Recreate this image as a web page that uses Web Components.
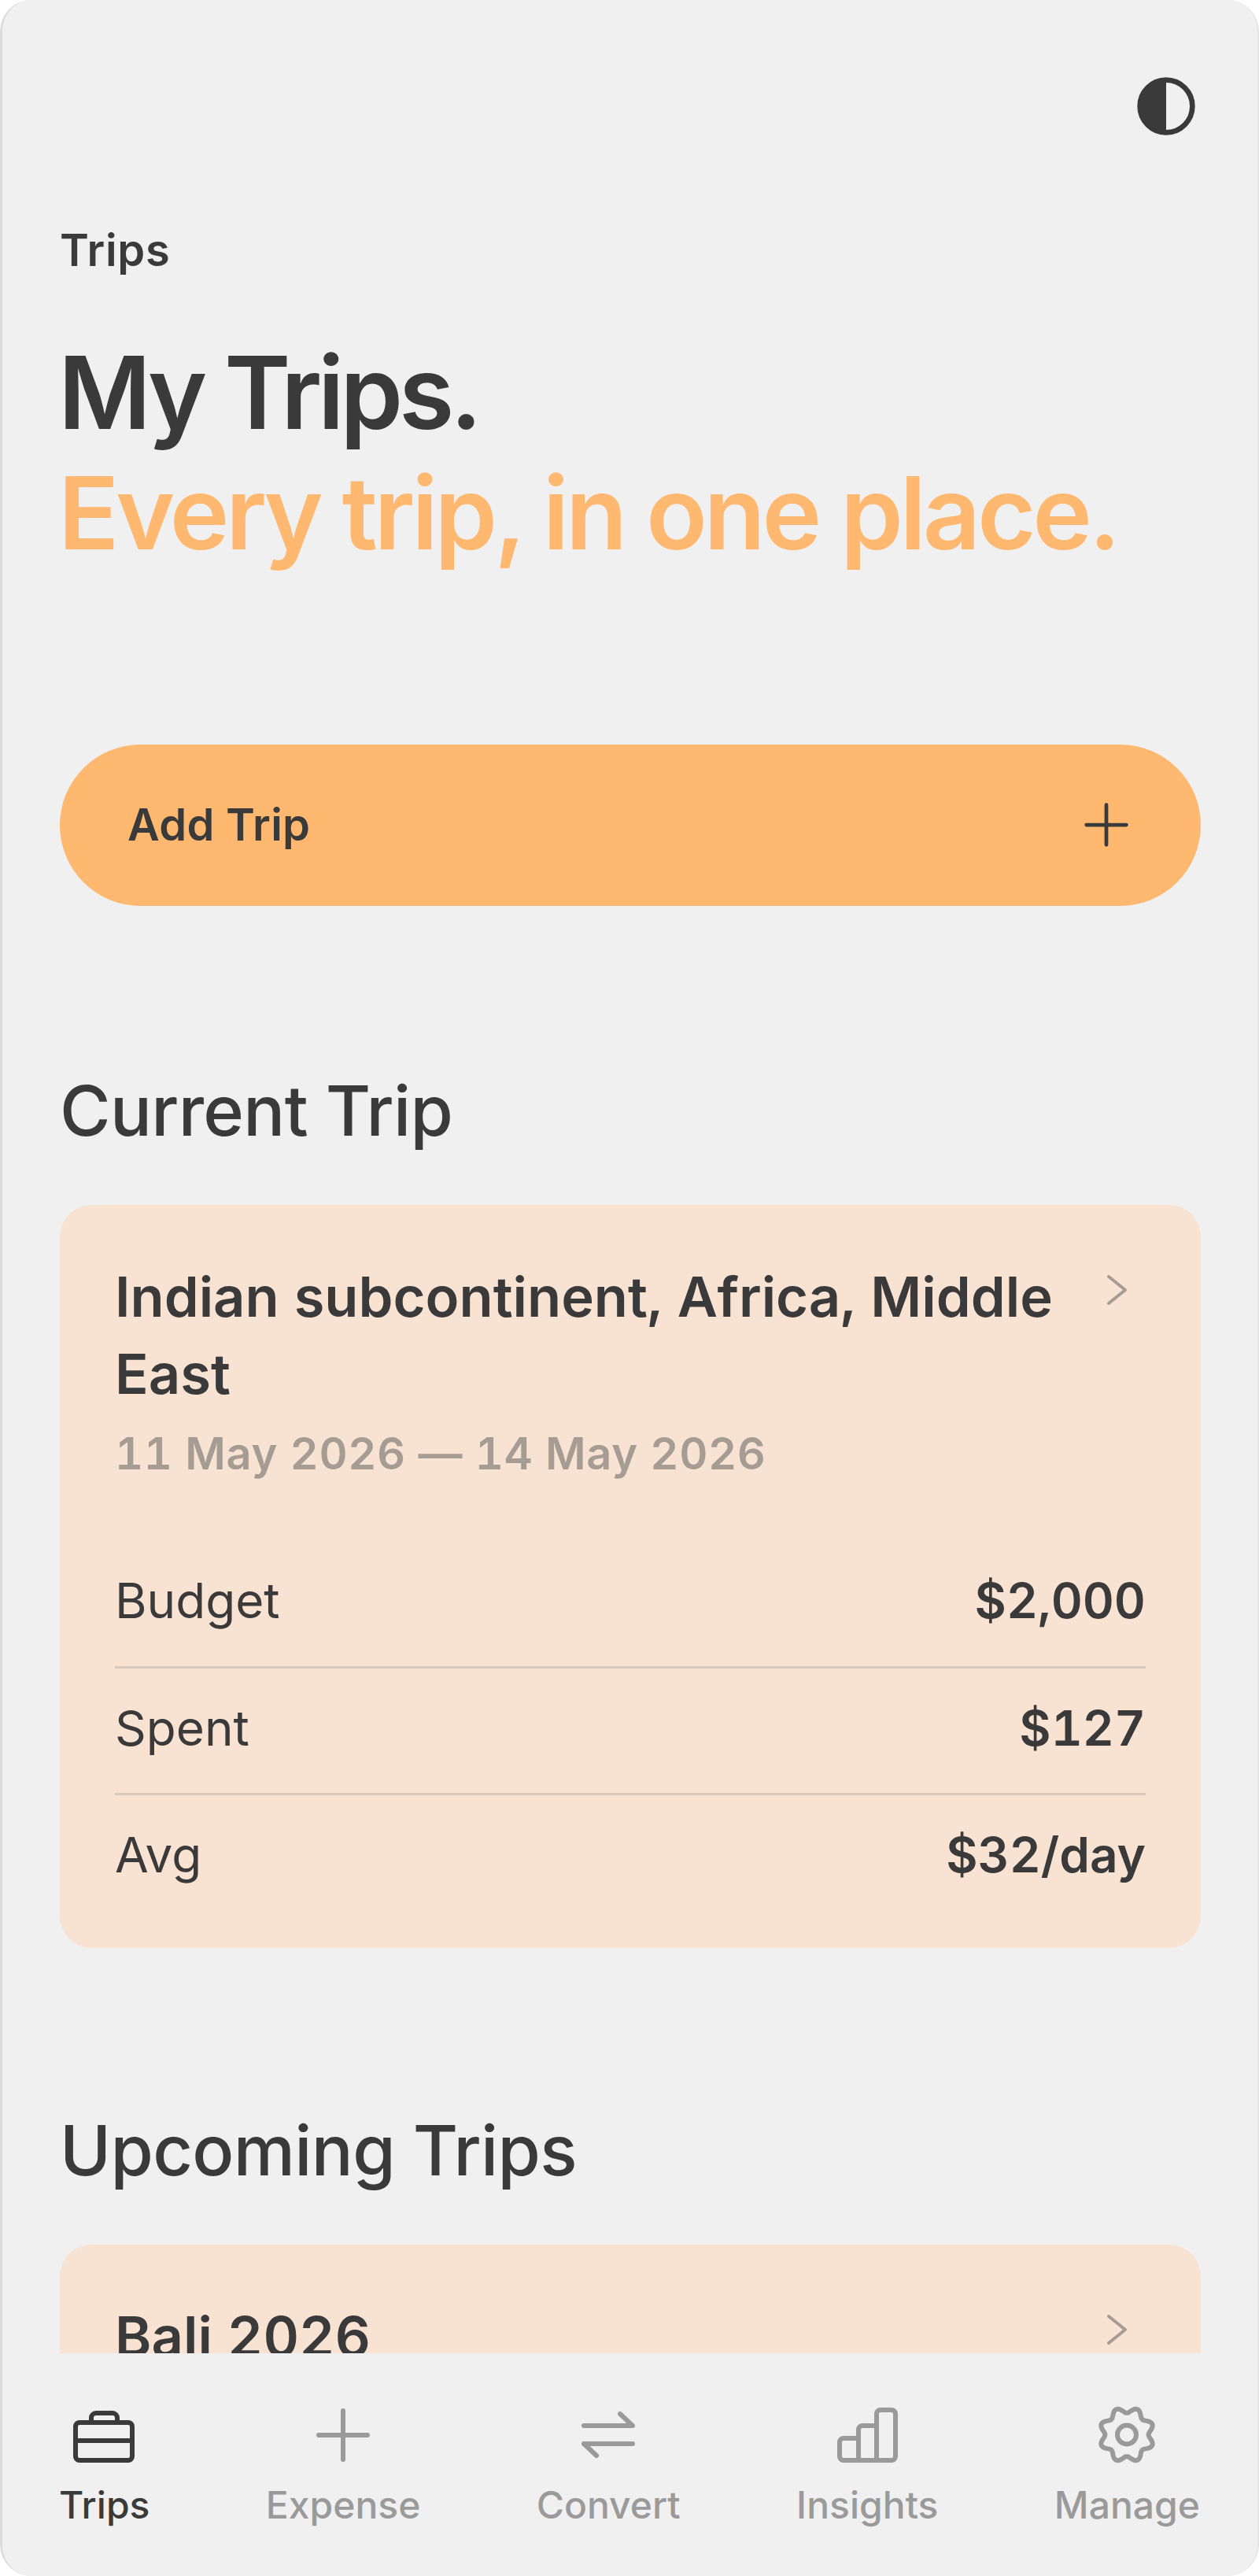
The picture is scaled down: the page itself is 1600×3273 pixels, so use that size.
<!DOCTYPE html>
<html lang="en">
<head>
<meta charset="utf-8">
<title>Trips</title>
<style>
  html, body { margin: 0; padding: 0; background: #fff; }
  body { font-family: Inter, "Liberation Sans", sans-serif; color: #3a3a3a; }
</style>
</head>
<body>
<app-frame>
  <page-header slot="header"></page-header>
  <add-button slot="content">Add Trip</add-button>
  <section-title slot="content" style="margin-top:207px">Current Trip</section-title>
  <trip-card slot="content" style="margin-top:67px" name="Indian subcontinent, Africa, Middle East" dates="11 May 2026 — 14 May 2026">
    <stat-row label="Budget" value="$2,000"></stat-row>
    <stat-row label="Spent" value="$127"></stat-row>
    <stat-row label="Avg" value="$32/day" last></stat-row>
  </trip-card>
  <section-title slot="content" style="margin-top:204px">Upcoming Trips</section-title>
  <trip-card slot="content" style="margin-top:67px" name="Bali 2026"></trip-card>
  <bottom-nav slot="nav"></bottom-nav>
</app-frame>

<script>
class AppFrame extends HTMLElement {
  constructor() {
    super();
    this.attachShadow({ mode: 'open' });
    this.shadowRoot.innerHTML = `
      <style>
        :host { display: flex; flex-direction: column; box-sizing: border-box; width: 1600px; height: 3273px;
          background: #f0f0f0; border-radius: 40px; border-left: 3px solid #dcdcdc; border-right: 2px solid #e4e4e4; overflow: hidden; }
        .scroll { flex: 1; min-height: 0; overflow: hidden; display: flex; flex-direction: column; padding: 0 72px 0 73px; }
        .content { display: flex; flex-direction: column; }
      </style>
      <div class="scroll">
        <slot name="header"></slot>
        <div class="content"><slot name="content"></slot></div>
      </div>
      <slot name="nav"></slot>`;
  }
}

class PageHeader extends HTMLElement {
  constructor() {
    super();
    this.attachShadow({ mode: 'open' });
    this.shadowRoot.innerHTML = `
      <style>
        :host { display: block; }
        .top { display: flex; justify-content: flex-end; padding: 95px 4px 0 0; }
        .top svg { display: block; width: 80px; height: 80px; }
        .crumb { font-size: 56px; font-weight: 600; line-height: 68px; margin-top: 109px; letter-spacing: 0.7px; }
        h1 { margin: 70px 0 0 -2px; font-size: 128px; font-weight: 600; line-height: 153px; letter-spacing: -5.2px; color: #3a3a3a; }
        h1 span { display: block; color: #ffb870; letter-spacing: -4.3px; }
        .spacer { height: 218px; }
      </style>
      <div class="top">
        <svg viewBox="0 0 24 24"><circle cx="12" cy="12" r="10" fill="none" stroke="#3a3a3a" stroke-width="2"/><path d="M12 2a10 10 0 0 0 0 20z" fill="#3a3a3a"/></svg>
      </div>
      <div class="crumb">Trips</div>
      <h1>My Trips.<span>Every trip, in one place.</span></h1>
      <div class="spacer"></div>`;
  }
}

class AddButton extends HTMLElement {
  constructor() {
    super();
    this.attachShadow({ mode: 'open' });
    this.shadowRoot.innerHTML = `
      <style>
        :host { display: flex; align-items: center; justify-content: space-between; box-sizing: border-box; height: 205px; padding: 0 82px 2px 86px; border-radius: 103px; background: #ffb870; font-size: 56px; font-weight: 600; letter-spacing: 0.005em; color: #3a3a3a; }
        svg { display: block; width: 76px; height: 76px; }
      </style>
      <span><slot></slot></span>
      <svg viewBox="0 0 24 24" fill="none" stroke="#3a3a3a" stroke-width="1.5" stroke-linecap="round"><path d="M12 4v16M4 12h16"/></svg>`;
  }
}

class SectionTitle extends HTMLElement {
  constructor() {
    super();
    this.attachShadow({ mode: 'open' });
    this.shadowRoot.innerHTML = `
      <style>
        :host { display: block; font-size: 88px; font-weight: 500; line-height: 106px; letter-spacing: -0.0075em; color: #3a3a3a; }
      </style>
      <slot></slot>`;
  }
}

class TripCard extends HTMLElement {
  constructor() {
    super();
    this.attachShadow({ mode: 'open' });
  }

  connectedCallback() {
    const dates = this.getAttribute('dates');
    this.shadowRoot.innerHTML = `
      <style>
        :host { display: block; flex: none; background: #f8e3d3; border-radius: 40px; padding: 68px 70px 32px; font-variant-numeric: tabular-nums; }
        .head { display: flex; justify-content: space-between; align-items: flex-start; gap: 20px; }
        .name { font-size: 70.5px; font-weight: 600; line-height: 98px; color: #3a3a3a; }
        .dates { font-size: 56px; font-weight: 600; line-height: 68px; letter-spacing: 0.6px; color: #a59d93; margin-top: 18px; }
        svg { flex: none; display: block; width: 48px; height: 48px; margin-top: 16px; margin-right: 13px; }
        .rows { margin-top: 77px; }
      </style>
      <div class="head">
        <div class="name">${this.getAttribute('name')}</div>
        <svg viewBox="0 0 24 24" fill="none" stroke="#a59d93" stroke-width="2" stroke-linecap="round" stroke-linejoin="round"><path d="M7 3.5l10.5 8.5-10.5 8.5"/></svg>
      </div>
      ${dates ? `<div class="dates">${dates}</div>` : ''}
      <div class="rows"><slot></slot></div>`;
  }
}

class StatRow extends HTMLElement {
  constructor() {
    super();
    this.attachShadow({ mode: 'open' });
  }

  connectedCallback() {
    this.shadowRoot.innerHTML = `
      <style>
        :host { display: flex; justify-content: space-between; align-items: center; box-sizing: border-box; height: 161.5px; padding-bottom: 7px; border-bottom: 3px solid #d8c9bc; font-size: 62px; color: #3a3a3a; }
        :host([last]) { border-bottom-color: transparent; }
        b { font-weight: 600; }
      </style>
      <span>${this.getAttribute('label')}</span>
      <b>${this.getAttribute('value')}</b>`;
  }
}

// gear outline: 8 lobes, a notch straight up
function gearPath(cx, cy, mid, amp) {
  let d = '';
  for (let i = 0; i < 144; i++) {
    const a = i / 144 * Math.PI * 2;
    const r = mid - amp * Math.cos(8 * a);
    d += (i ? 'L' : 'M') + (cx + r * Math.sin(a)).toFixed(2) + ' ' + (cy - r * Math.cos(a)).toFixed(2);
  }
  return d + 'Z';
}

const NAV_ICONS = {
  Trips: '<rect x="5" y="25" width="72" height="48" rx="5"/><path d="M5 48h72M25 25v-6a6 6 0 0 1 6-6h21a6 6 0 0 1 6 6v6"/>',
  Expense: '<path d="M42 10v62M11 41h62"/>',
  Convert: '<path d="M11 29h62L57 14M11 52h62M11 52l16 15"/>',
  Insights: '<path d="M31 45H12a5 5 0 0 0-5 5v18a5 5 0 0 0 5 5h61a5 5 0 0 0 5-5V14a5 5 0 0 0-5-5H59a5 5 0 0 0-5 5v59M54 29H36a5 5 0 0 0-5 5v39"/>',
  Manage: `<path d="${gearPath(42, 40.5, 31.3, 3.7)}"/><circle cx="42" cy="40.5" r="12"/>`
};

class NavItem extends HTMLElement {
  constructor() {
    super();
    this.attachShadow({ mode: 'open' });
  }

  connectedCallback() {
    const label = this.getAttribute('label');
    this.shadowRoot.innerHTML = `
      <style>
        :host { display: flex; flex-direction: column; align-items: center; color: #9a9a9a; font-size: 48px; font-weight: 500; }
        :host([active]) { color: #3a3a3a; }
        svg { display: block; width: 84px; height: 84px; fill: none; stroke: currentColor; stroke-width: 6; stroke-linecap: round; stroke-linejoin: round; }
        span { display: block; margin-top: 16px; line-height: 60px; }
      </style>
      <svg viewBox="0 0 84 84">${NAV_ICONS[label]}</svg>
      <span>${label}</span>`;
  }
}

class BottomNav extends HTMLElement {
  constructor() {
    super();
    this.attachShadow({ mode: 'open' });
    this.shadowRoot.innerHTML = `
      <style>
        :host { display: flex; justify-content: space-between; align-items: flex-start; flex: none; box-sizing: border-box; height: 283px; padding: 63px 73px 0 72px; background: #f0f0f0; }
      </style>
      <nav-item label="Trips" active></nav-item>
      <nav-item label="Expense"></nav-item>
      <nav-item label="Convert"></nav-item>
      <nav-item label="Insights"></nav-item>
      <nav-item label="Manage"></nav-item>`;
  }
}

customElements.define('app-frame', AppFrame);
customElements.define('page-header', PageHeader);
customElements.define('add-button', AddButton);
customElements.define('section-title', SectionTitle);
customElements.define('trip-card', TripCard);
customElements.define('stat-row', StatRow);
customElements.define('nav-item', NavItem);
customElements.define('bottom-nav', BottomNav);
</script>
</body>
</html>
